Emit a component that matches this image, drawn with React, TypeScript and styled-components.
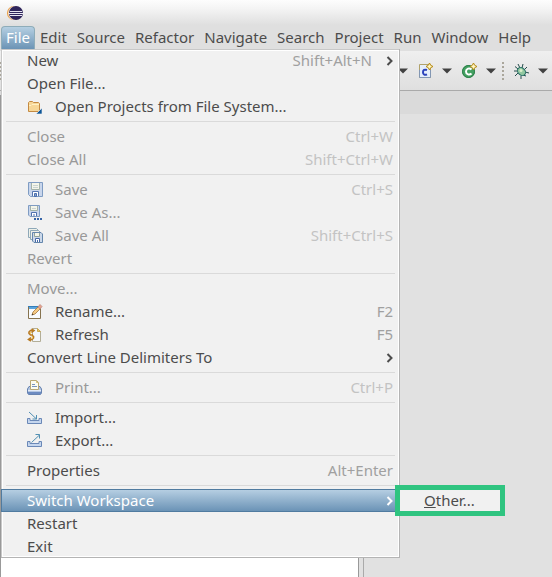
import React from "react";
import styled, { createGlobalStyle, css } from "styled-components";

const GlobalStyle = createGlobalStyle`
  *, *::before, *::after { box-sizing: border-box; }
  html, body { margin: 0; }
  body {
    font-family: "Noto Sans", "Open Sans", sans-serif;
    font-size: 15px;
    line-height: 20px;
    color: #4c4c4c;
    background: #e1e1e1;
  }
  button { font: inherit; color: inherit; margin: 0; border: 0; background: none; }
  svg { display: block; flex: none; }
`;

const Window = styled.div`
  position: relative;
  display: flex;
  flex-direction: column;
  min-height: 100vh;
  overflow: hidden;
`;

const TitleBar = styled.header`
  display: flex;
  align-items: center;
  height: 25px;
  padding: 0 7px;
  background: linear-gradient(#fdfdfd, #f4f4f4 35%, #dfdfdf);
`;

const MenuBar = styled.nav`
  display: flex;
  height: 26px;
  padding: 1px 1px 0;
  background: #dfdfdf;
`;

const MenuBarItem = styled.button<{ $open?: boolean }>`
  height: 23px;
  padding: 0 5px 2px;
  white-space: nowrap;
  ${({ $open }) =>
    $open &&
    css`
      color: #fff;
      border: 1px solid #8eacb9;
      border-bottom: 0;
      border-radius: 4px 4px 0 0;
      padding: 0 4px 3px;
      background: linear-gradient(#b5cfe2, #6b93b5);
    `}
`;

const ToolBar = styled.div`
  display: flex;
  align-items: center;
  height: 40px;
  padding-right: 4px;
  border-bottom: 1px solid #aaa;
  background: linear-gradient(#efefef, #dfdfdf);
`;

const ToolButton = styled.button`
  display: flex;
  align-items: center;
  gap: 9px;
  height: 24px;
  padding: 0;
  margin-left: 9px;
`;

const Grip = styled.span<{ $edge?: boolean }>`
  width: ${({ $edge }) => ($edge ? "1px" : "2px")};
  height: 18px;
  margin-left: ${({ $edge }) => ($edge ? "0" : "6px")};
  margin-right: ${({ $edge }) => ($edge ? "auto" : "0")};
  background: repeating-linear-gradient(#aaa69b 0 2px, transparent 2px 4px);
`;

const Workspace = styled.main`
  display: flex;
  flex: 1;
  background: linear-gradient(#dadada 0 23px, #e1e1e1 23px);
`;

const Explorer = styled.section`
  flex: 0 0 65%;
  margin-top: 4px;
  border: solid #999;
  border-width: 0 1px;
  background: #fff;
`;

const Editor = styled.section`
  flex: 1;
  margin-left: 4px;
  border-left: 1px solid #aaa;
`;

const Menu = styled.div`
  position: absolute;
  top: 49px;
  left: 1px;
  width: 399px;
  background: #f1f1f1;
  box-shadow: inset -1px -1px #b4b4b4, inset 1px 1px #c8c8c8, inset 0 0 0 2px #fff;
`;

const Row = styled.button<{ $selected?: boolean }>`
  display: flex;
  align-items: center;
  width: 100%;
  height: 23px;
  padding: 0 7px 0 26px;
  text-align: left;
  white-space: nowrap;
  &:disabled { color: #999; }
  ${({ $selected }) =>
    $selected &&
    css`
      color: #fff;
      border: 1px solid #507ba0;
      padding: 0 6px 0 25px;
      background: linear-gradient(#b5cee2, #6b93b6);
    `}
`;

const IconSlot = styled.span`
  width: 16px;
  height: 16px;
  margin-right: 12px;
`;

const Label = styled.span`
  flex: 1;
  padding-bottom: 2px;
`;

const Shortcut = styled.kbd<{ $dim?: boolean }>`
  font: inherit;
  padding-bottom: 2px;
  color: ${({ $dim }) => ($dim ? "#c3c3c3" : "#a0a0a0")};
`;

const ArrowSlot = styled.span<{ $wide?: boolean }>`
  display: flex;
  justify-content: flex-end;
  margin-left: ${({ $wide }) => ($wide ? "14px" : "0")};
`;

const Separator = styled.hr`
  height: 1px;
  margin: 3px 5px;
  border: 0;
  background: #dadada;
`;

const SubMenu = styled.div`
  position: absolute;
  top: 485px;
  left: 395px;
  width: 110px;
  border: 5px solid #2fc480;
  background: #f1f1f1;
`;

const SubMenuRow = styled.button`
  display: block;
  width: 100%;
  height: 21px;
  padding: 0 24px 2px;
  text-align: left;
`;

const EclipseLogo = () => (
  <svg width="16" height="16" viewBox="0 0 16 16">
    <circle cx="7" cy="8" r="7" fill="#e89a3c" />
    <circle cx="8" cy="8" r="7" fill="#f4e3d2" />
    <circle cx="9" cy="8" r="7" fill="#30265c" />
    <path d="M3 6.5h12M2 8.5h14M3 10.5h12" stroke="#e9e7f3" strokeWidth="1" shapeRendering="crispEdges" />
  </svg>
);

const FolderIcon = () => (
  <svg width="16" height="16" viewBox="0 0 16 16">
    <path d="M1.5 12V3.5l1-1h3l1 1h5l1 1V12l-1 .5h-10z" fill="#f7d797" stroke="#c48a42" />
    <path d="M2 6.5h2L5 5.5h7" fill="none" stroke="#fff1c4" />
    <path d="M15 9v6H9z" fill="#0d5698" stroke="#f1f1f1" strokeWidth=".6" />
  </svg>
);

const SaveIcon = () => (
  <svg width="16" height="16" viewBox="0 0 16 16">
    <path d="M1.5.5h14v14h-12l-2-2z" fill="#c9d6ec" stroke="#7f9cc3" />
    <path d="M4.5 1v6.5h8V1" fill="#f4f5ea" stroke="#a3b3a9" />
    <path d="M6 3.5h5M6 5.5h5" stroke="#c9d3d2" />
    <path d="M5.5 14v-4.5h6V14" fill="#fff" stroke="#5575af" />
    <path d="M7.5 11.5v3h2v-3z" fill="#8aa3ce" stroke="#4a6fae" />
  </svg>
);

const SaveAsIcon = () => (
  <svg width="16" height="16" viewBox="0 0 16 16">
    <path d="M1.5.5h11v11H3l-1.5-1.5z" fill="#c9d6ec" stroke="#7f9cc3" />
    <path d="M3.5 1v4.5h7V1" fill="#f4f5ea" stroke="#a3b3a9" />
    <path d="M5 3.5h4" stroke="#c9d3d2" />
    <path d="M4.5 11V7.5h5V11M7 9v2.5" fill="#fff" stroke="#4f71ad" />
    <path d="M7 12h9v3H7z" fill="#f1f1f1" />
    <path d="M7 13h2v2H7zM10 13h2v2h-2zM13 13h2v2h-2z" fill="#3865a8" />
  </svg>
);

const SaveAllIcon = () => (
  <svg width="16" height="16" viewBox="0 0 16 16">
    <path d="M1.5 9.5V.5h8l2 2v7z" fill="#edf0e9" stroke="#8ea8b8" />
    <path d="M3.5 11.5v-9h8l2 2v7z" fill="#edf0e9" stroke="#8ea8b8" />
    <path d="M5.5 4.5h8.5l1.5 1.5v8.5H7l-1.5-1.5z" fill="#cbd8ea" stroke="#6587ac" />
    <path d="M7.5 5v3.5h5V5" fill="#f4f5e9" stroke="#91a49b" />
    <path d="M8.5 14v-3.5h4V14M10.5 12v2" fill="#fff" stroke="#4769a6" />
  </svg>
);

const RenameIcon = () => (
  <svg width="16" height="16" viewBox="0 0 16 16">
    <path d="M1.5 2.5h12v12h-12z" fill="#f8fbff" stroke="#86734f" />
    <path d="M2 3h11v2H2z" fill="#5ba4dc" />
    <path d="M1 2.5h13" stroke="#327db9" />
    <path d="M5 11l1-3 6-6 2 2-6 6z" fill="#f5c984" stroke="#a3773d" strokeWidth=".8" />
    <path d="M11 3l2-2.5 2 2L13 5z" fill="#e8a28d" stroke="#bd8a80" strokeWidth=".8" />
    <path d="M4.5 11.5l1-2 1 1z" fill="#3d3a35" />
  </svg>
);

const RefreshIcon = () => (
  <svg width="16" height="16" viewBox="0 0 16 16">
    <path d="M5.5 1.5h5l3 3v10h-8z" fill="#f3f6fa" stroke="#b3ae97" />
    <path d="M10.5 1.5v3h3z" fill="#e9c86d" stroke="#c9a951" />
    <path d="M6 3.5H3.500L2 5v1.5L3.500 8H6M4.5 2L7 3.5 4.5 5.5" fill="none" stroke="#b87a22" strokeWidth="1.6" />
    <path d="M2 12.5h3L6.5 11V9.500L5 8.5M4 10.500l-2.500 2L4 14" fill="none" stroke="#b87a22" strokeWidth="1.6" />
    <path d="M3.5 5v2M5.500 9.5v2" stroke="#f6cf62" />
  </svg>
);

const PrintIcon = () => (
  <svg width="16" height="16" viewBox="0 0 16 16">
    <path d="M2 6.5L.5 9v4l1 1.500h12l1-1.500V9L13 6.500z" fill="#b4c6e2" stroke="#6783b0" />
    <path d="M3.5 9.5v-9h6l2 2v7z" fill="#fbfcef" stroke="#b8a973" />
    <path d="M9.5.5v2h2" fill="none" stroke="#d0bc78" />
    <path d="M5 4.5h3M5 6.5h5" stroke="#7794bd" />
    <path d="M1 10.5h13" stroke="#e3ebf8" />
    <path d="M1 12h13v2H1z" fill="#6c8bc1" />
  </svg>
);

const Tray = ({ children }: { children: React.ReactNode }) => (
  <svg width="16" height="16" viewBox="0 0 16 16">
    <path d="M3 8.5H.5v5h14v-5H12v2H3z" fill="#c5d6ee" stroke="#6a88b7" />
    {children}
  </svg>
);

const ImportIcon = () => (
  <Tray>
    <path d="M2 2l7.500 7M9.500 5v4H5.500" fill="none" stroke="#518fb2" />
  </Tray>
);

const ExportIcon = () => (
  <Tray>
    <path d="M4.500 9.500l8-7.500M8.500 1.500h4v4" fill="none" stroke="#518fb2" />
  </Tray>
);

const Sparkle = () => (
  <path
    d="M12.500 0l1.200 2.300L16 3.500l-2.300 1.200L12.500 7l-1.200-2.300L9 3.500l2.300-1.200z"
    fill="#fff6c4"
    stroke="#b68a14"
  />
);

const NewCFileIcon = () => (
  <svg width="16" height="16" viewBox="0 0 16 16">
    <path d="M2.5 1.5h11v13h-11z" fill="#e5eefb" stroke="#b1a26a" />
    <path d="M2.5 7v7.5h11V7" fill="none" stroke="#8397b3" />
    <path d="M10 7c-2.500-1-4 .2-4 2.200s1.500 3.400 4 2.200" fill="none" stroke="#2b42bb" strokeWidth="2" />
    <Sparkle />
  </svg>
);

const NewClassIcon = () => (
  <svg width="16" height="16" viewBox="0 0 16 16">
    <circle cx="7.5" cy="8.5" r="6.5" fill="#43a061" />
    <circle cx="7.5" cy="8.5" r="6" fill="none" stroke="#2b7d48" />
    <path d="M10.500 6.500c-2-2-5.500-1-5.500 2s3.500 4 5.500 2" fill="none" stroke="#fff" strokeWidth="2" />
    <Sparkle />
  </svg>
);

const BugIcon = () => (
  <svg width="16" height="16" viewBox="0 0 16 16">
    <path
      d="M5 6L2 3.500M5 8H1M5 10l-3 3M7 5L5 1M9 5l1-4M11 7l3-3M12 9l4 1M10 12l3 1M8 13v3"
      fill="none"
      stroke="#264d4c"
    />
    <ellipse cx="8.5" cy="8.5" rx="3.5" ry="4.5" transform="rotate(-45 8.5 8.5)" fill="#91c8a0" stroke="#286e67" />
    <circle cx="8" cy="7.5" r="1.5" fill="#dbefca" />
  </svg>
);

const Caret = () => (
  <svg width="10" height="6" viewBox="0 0 10 6">
    <path d="M0 .5h10L5 5.5z" fill="#424242" />
  </svg>
);

const Chevron = () => (
  <svg width="7" height="10" viewBox="0 0 7 10">
    <path d="M1.5 1l4 4-4 4" fill="none" stroke="currentColor" strokeWidth="2" />
  </svg>
);

const menus = ["File", "Edit", "Source", "Refactor", "Navigate", "Search", "Project", "Run", "Window", "Help"];

type Entry = {
  label: string;
  keys?: string;
  icon?: React.ComponentType;
  disabled?: boolean;
  submenu?: boolean;
  selected?: boolean;
};

const groups: Entry[][] = [
  [
    { label: "New", keys: "Shift+Alt+N", submenu: true },
    { label: "Open File..." },
    { label: "Open Projects from File System...", icon: FolderIcon },
  ],
  [
    { label: "Close", keys: "Ctrl+W", disabled: true },
    { label: "Close All", keys: "Shift+Ctrl+W", disabled: true },
  ],
  [
    { label: "Save", keys: "Ctrl+S", icon: SaveIcon, disabled: true },
    { label: "Save As...", icon: SaveAsIcon, disabled: true },
    { label: "Save All", keys: "Shift+Ctrl+S", icon: SaveAllIcon, disabled: true },
    { label: "Revert", disabled: true },
  ],
  [
    { label: "Move...", disabled: true },
    { label: "Rename...", keys: "F2", icon: RenameIcon },
    { label: "Refresh", keys: "F5", icon: RefreshIcon },
    { label: "Convert Line Delimiters To", submenu: true },
  ],
  [{ label: "Print...", keys: "Ctrl+P", icon: PrintIcon, disabled: true }],
  [
    { label: "Import...", icon: ImportIcon },
    { label: "Export...", icon: ExportIcon },
  ],
  [{ label: "Properties", keys: "Alt+Enter" }],
  [
    { label: "Switch Workspace", submenu: true, selected: true },
    { label: "Restart" },
    { label: "Exit" },
  ],
];

const MenuRow = ({ label, keys, icon: Icon, disabled, submenu, selected }: Entry) => (
  <Row role="menuitem" disabled={disabled} $selected={selected} aria-haspopup={submenu ? "menu" : undefined}>
    {Icon && (
      <IconSlot>
        <Icon />
      </IconSlot>
    )}
    <Label>{label}</Label>
    {keys && <Shortcut $dim={disabled}>{keys}</Shortcut>}
    {submenu && (
      <ArrowSlot $wide={Boolean(keys)}>
        <Chevron />
      </ArrowSlot>
    )}
  </Row>
);

export default function App() {
  return (
    <Window>
      <GlobalStyle />
      <TitleBar>
        <EclipseLogo />
      </TitleBar>
      <MenuBar>
        {menus.map((name) => (
          <MenuBarItem key={name} $open={name === "File"}>
            {name}
          </MenuBarItem>
        ))}
      </MenuBar>
      <ToolBar>
        <Grip $edge />
        <ToolButton aria-label="New source folder">
          <Caret />
        </ToolButton>
        <ToolButton aria-label="New C file">
          <NewCFileIcon />
          <Caret />
        </ToolButton>
        <ToolButton aria-label="New class">
          <NewClassIcon />
          <Caret />
        </ToolButton>
        <Grip />
        <ToolButton aria-label="Debug">
          <BugIcon />
          <Caret />
        </ToolButton>
      </ToolBar>
      <Workspace>
        <Explorer />
        <Editor />
      </Workspace>
      <Menu role="menu">
        {groups.map((rows, index) => (
          <React.Fragment key={rows[0].label}>
            {index > 0 && <Separator />}
            {rows.map((row) => (
              <MenuRow key={row.label} {...row} />
            ))}
          </React.Fragment>
        ))}
      </Menu>
      <SubMenu role="menu">
        <SubMenuRow role="menuitem">
          <u>O</u>ther...
        </SubMenuRow>
      </SubMenu>
    </Window>
  );
}
